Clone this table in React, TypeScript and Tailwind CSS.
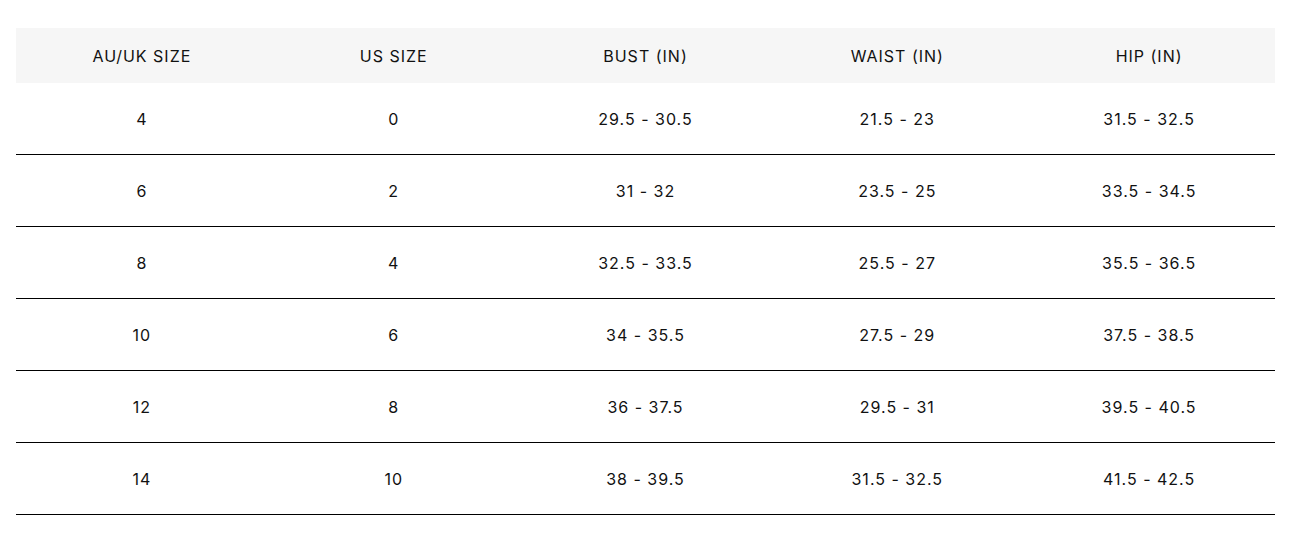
import React from "react";

const headers = ["AU/UK SIZE", "US SIZE", "BUST (IN)", "WAIST (IN)", "HIP (IN)"];
const rows = [
  ["4", "0", "29.5 - 30.5", "21.5 - 23", "31.5 - 32.5"],
  ["6", "2", "31 - 32", "23.5 - 25", "33.5 - 34.5"],
  ["8", "4", "32.5 - 33.5", "25.5 - 27", "35.5 - 36.5"],
  ["10", "6", "34 - 35.5", "27.5 - 29", "37.5 - 38.5"],
  ["12", "8", "36 - 37.5", "29.5 - 31", "39.5 - 40.5"],
  ["14", "10", "38 - 39.5", "31.5 - 32.5", "41.5 - 42.5"],
];

export default function App() {
  return (
    <div className="w-[1298px] h-[537px] bg-white pt-[28px] pl-[16px]" style={{ fontFamily: "Inter, 'Noto Sans', sans-serif" }}>
      <div className="w-[1259px] text-[16px] tracking-[1px] text-[#111]">
        <div className="grid grid-cols-5 h-[55px] bg-[#f6f6f6] items-center">
          {headers.map((h) => (
            <div key={h} className="text-center">{h}</div>
          ))}
        </div>
        {rows.map((r, i) => (
          <div key={i} className="grid grid-cols-5 h-[72px] border-b border-black items-center">
            {r.map((c, j) => (
              <div key={j} className="text-center">{c}</div>
            ))}
          </div>
        ))}
      </div>
    </div>
  );
}
